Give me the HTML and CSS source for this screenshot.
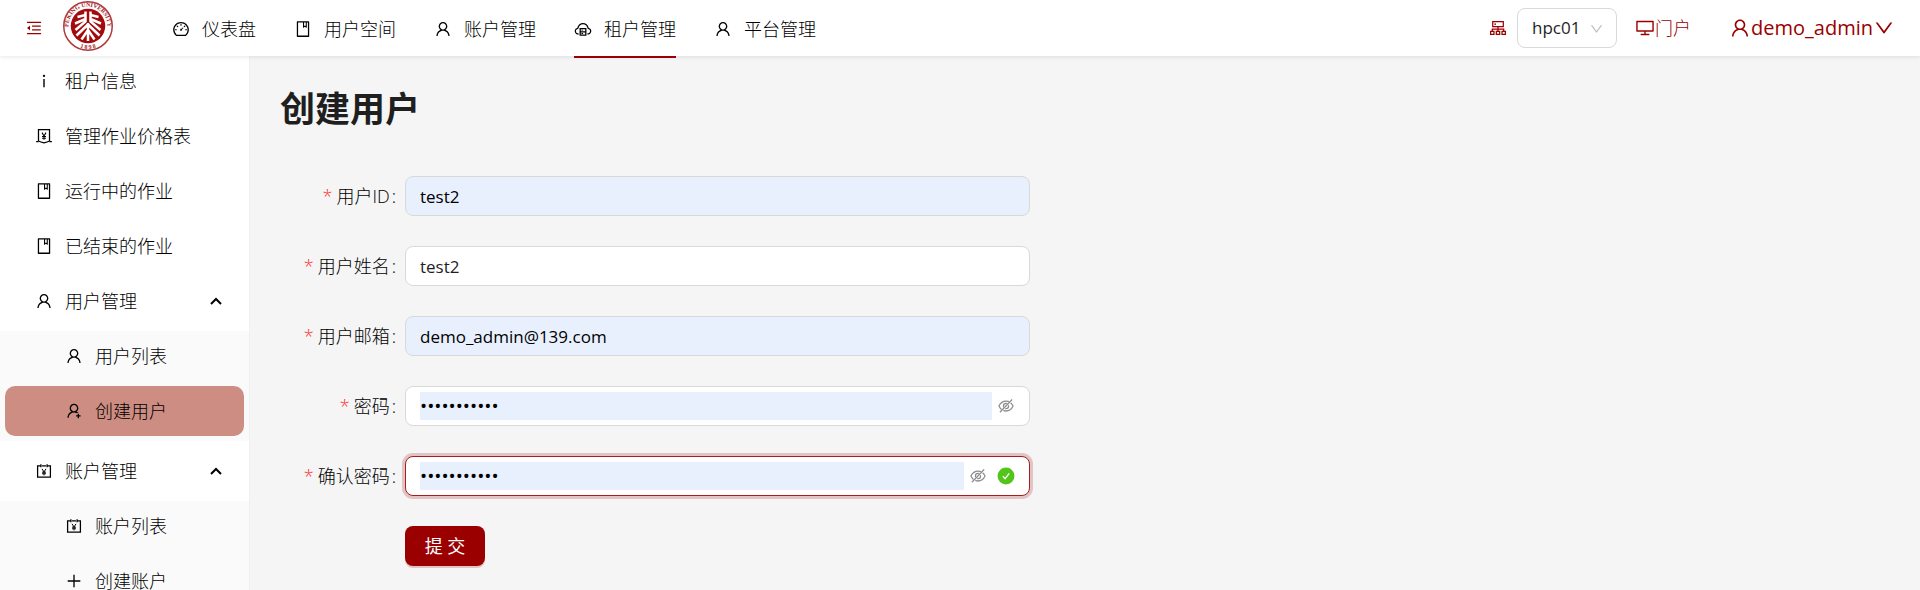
FILE: index.html
```html
<!DOCTYPE html>
<html lang="zh-CN">
<head>
<meta charset="utf-8">
<meta name="viewport" content="width=device-width, initial-scale=1">
<title>创建用户</title>
<link rel="stylesheet" href="styles.css">
</head>
<body>
<svg class="sprite" aria-hidden="true">
  <symbol id="user" viewBox="0 0 1024 1024"><path d="M858.5 763.6a374 374 0 00-80.6-119.5 375.63 375.63 0 00-119.5-80.6c-.4-.2-.8-.3-1.2-.5C719.5 518 760 444.7 760 362c0-137-111-248-248-248S264 225 264 362c0 82.7 40.5 156 102.8 201.1-.4.2-.8.3-1.2.5-44.8 18.9-85 46-119.5 80.6a375.63 375.63 0 00-80.6 119.5A371.7 371.7 0 00136 901.8a8 8 0 008 8.2h60c4.4 0 7.9-3.5 8-7.8 2-77.2 33-149.5 87.8-204.3 56.7-56.7 132-87.9 212.2-87.9s155.5 31.2 212.2 87.9C779 752.7 810 825 812 902.2c.1 4.4 3.6 7.8 8 7.8h60a8 8 0 008-8.2c-1-47.8-10.9-94.3-29.5-138.2zM512 534c-45.9 0-89.1-17.9-121.6-50.4S340 407.9 340 362c0-45.9 17.9-89.1 50.4-121.6S466.1 190 512 190s89.1 17.9 121.6 50.4S684 316.1 684 362c0 45.9-17.9 89.1-50.4 121.6S557.9 534 512 534z"/></symbol>
  <symbol id="user-add" viewBox="0 0 1024 1024"><path d="M678.3 642.4c24.2-13 51.9-20.4 81.4-20.4h.1c3 0 4.4-3.6 2.2-5.6a371.67 371.67 0 00-103.7-65.8c-.4-.2-.8-.3-1.2-.5C719.2 505 759.6 431.7 759.6 349c0-137-110.8-248-247.5-248S264.7 212 264.7 349c0 82.7 40.4 156 102.6 201.1-.4.2-.8.3-1.2.5-44.7 18.9-84.8 46-119.3 80.6a373.42 373.42 0 00-80.4 119.5A373.6 373.6 0 00137 888.8a8 8 0 008 8.2h59.9c4.3 0 7.9-3.5 8-7.8 2-77.2 32.9-149.5 87.6-204.3C357 628.2 432.2 597 512.2 597c56.7 0 111.1 15.7 158 45.1a8.1 8.1 0 008.1.3zM512.2 521c-45.8 0-88.9-17.9-121.4-50.4A171.2 171.2 0 01340.5 349c0-45.9 17.9-89.1 50.3-121.6S466.3 177 512.2 177s88.9 17.9 121.4 50.4A171.2 171.2 0 01683.9 349c0 45.9-17.9 89.1-50.3 121.6C601.1 503.1 558 521 512.2 521zM880 759h-84v-84c0-4.4-3.6-8-8-8h-56c-4.4 0-8 3.6-8 8v84h-84c-4.4 0-8 3.6-8 8v56c0 4.4 3.6 8 8 8h84v84c0 4.4 3.6 8 8 8h56c4.4 0 8-3.6 8-8v-84h84c4.4 0 8-3.6 8-8v-56c0-4.4-3.6-8-8-8z"/></symbol>
  <symbol id="book" viewBox="0 0 1024 1024"><path d="M832 64H192c-17.7 0-32 14.3-32 32v832c0 17.7 14.3 32 32 32h640c17.7 0 32-14.3 32-32V96c0-17.7-14.3-32-32-32zm-260 72h96v209.9L621.5 312 572 347.4V136zm220 752H232V136h280v296.9c0 3.3 1 6.6 3 9.3a15.9 15.9 0 0022.3 3.7l83.8-59.9 81.4 59.4c2.7 2 6 3.1 9.4 3.1 8.8 0 16-7.2 16-16V136h64v752z"/></symbol>
  <symbol id="desktop" viewBox="0 0 1024 1024"><path d="M928 140H96c-17.7 0-32 14.3-32 32v496c0 17.7 14.3 32 32 32h380v112H304c-8.8 0-16 7.2-16 16v48c0 4.4 3.6 8 8 8h432c4.4 0 8-3.6 8-8v-48c0-8.8-7.2-16-16-16H548V700h380c17.7 0 32-14.3 32-32V172c0-17.7-14.3-32-32-32zm-40 488H136V212h752v416z"/></symbol>
  <symbol id="down" viewBox="0 0 1024 1024"><path d="M884 256h-75c-5.1 0-9.9 2.5-12.9 6.6L512 654.2 227.9 262.6c-3-4.1-7.8-6.6-12.9-6.6h-75c-6.5 0-10.3 7.4-6.5 12.7l352.6 486.1c12.8 17.6 39 17.6 51.7 0l352.6-486.1c3.9-5.3.1-12.7-6.4-12.7z"/></symbol>
  <symbol id="info" viewBox="0 0 1024 1024"><path d="M448 224a64 64 0 10128 0 64 64 0 10-128 0zm96 168h-64c-4.4 0-8 3.6-8 8v464c0 4.4 3.6 8 8 8h64c4.4 0 8-3.6 8-8V400c0-4.4-3.6-8-8-8z"/></symbol>
  <symbol id="fold" viewBox="0 0 1024 1024"><path d="M408 442h480c4.4 0 8-3.6 8-8v-56c0-4.4-3.6-8-8-8H408c-4.4 0-8 3.6-8 8v56c0 4.4 3.6 8 8 8zm-8 204c0 4.4 3.6 8 8 8h480c4.4 0 8-3.6 8-8v-56c0-4.4-3.6-8-8-8H408c-4.4 0-8 3.6-8 8v56zm504-486H120c-4.4 0-8 3.6-8 8v56c0 4.4 3.6 8 8 8h784c4.4 0 8-3.6 8-8v-56c0-4.4-3.6-8-8-8zm0 632H120c-4.4 0-8 3.6-8 8v56c0 4.4 3.6 8 8 8h784c4.4 0 8-3.6 8-8v-56c0-4.4-3.6-8-8-8zM115.4 518.9L271.7 642c5.8 4.6 14.4.5 14.4-6.9V388.9c0-7.4-8.5-11.5-14.4-6.9L115.4 505.1a8.74 8.74 0 000 13.8z"/></symbol>
  <symbol id="dashboard" viewBox="0 0 1024 1024"><path d="M924.8 385.6a446.7 446.7 0 00-96-142.4 446.7 446.7 0 00-142.4-96C631.1 123.8 572.5 112 512 112s-119.1 11.8-174.4 35.2a446.7 446.7 0 00-142.4 96 446.7 446.7 0 00-96 142.4C75.8 440.9 64 499.5 64 560c0 132.7 58.3 257.7 159.9 343.1l1.7 1.4c5.8 4.8 13.1 7.5 20.6 7.5h531.7c7.5 0 14.8-2.7 20.6-7.5l1.7-1.4C901.7 817.7 960 692.7 960 560c0-60.5-11.9-119.1-35.2-174.4zM761.4 836H262.6A371.12 371.12 0 01140 560c0-99.4 38.7-192.8 109-263 70.3-70.3 163.7-109 263-109 99.4 0 192.8 38.7 263 109 70.3 70.3 109 163.7 109 263 0 105.6-44.5 205.5-122.6 276zM623.5 421.5a8.03 8.03 0 00-11.3 0L527.7 506c-18.7-5-39.4-.2-54.1 14.5a55.95 55.95 0 000 79.2 55.95 55.95 0 0079.2 0 55.87 55.87 0 0014.5-54.1l84.5-84.5c3.1-3.1 3.1-8.2 0-11.3l-28.3-28.3zM490 320h44c4.4 0 8-3.6 8-8v-80c0-4.4-3.6-8-8-8h-44c-4.4 0-8 3.6-8 8v80c0 4.4 3.6 8 8 8zm260 218v44c0 4.4 3.6 8 8 8h80c4.4 0 8-3.6 8-8v-44c0-4.4-3.6-8-8-8h-80c-4.4 0-8 3.6-8 8zm12.7-197.2l-31.1-31.1a8.03 8.03 0 00-11.3 0l-56.6 56.6a8.03 8.03 0 000 11.3l31.1 31.1c3.1 3.1 8.2 3.1 11.3 0l56.6-56.6c3.1-3.1 3.1-8.2 0-11.3zm-458.6-31.1a8.03 8.03 0 00-11.3 0l-31.1 31.1a8.03 8.03 0 000 11.3l56.6 56.6c3.1 3.1 8.2 3.1 11.3 0l31.1-31.1c3.1-3.1 3.1-8.2 0-11.3l-56.6-56.6zM262 530h-80c-4.4 0-8 3.6-8 8v44c0 4.4 3.6 8 8 8h80c4.4 0 8-3.6 8-8v-44c0-4.4-3.6-8-8-8z"/></symbol>
  <symbol id="cloud-server" viewBox="0 0 1024 1024"><g fill="none" stroke="currentColor" stroke-width="72"><path d="M262 792A162 162 0 01215 470C255 340 370 208 512 208s257 132 297 262a162 162 0 01-47 322"/><path d="M352 484h320v376H352zM352 672h320"/></g><path d="M424 550h90v52h-90zM424 738h90v52h-90z"/></symbol>
  <symbol id="money" viewBox="0 0 1024 1024"><g fill="none" stroke="currentColor" stroke-width="72"><path d="M198 150h628v650c-90 50-200 80-314 100-114-20-224-50-314-100z"/><path d="M64 826h134M826 826h134"/><path d="M400 320l112 190 112-190M512 510v220M400 540h224M400 640h224" stroke-width="60"/></g></symbol>
  <symbol id="account-book" viewBox="0 0 1024 1024"><g fill="none" stroke="currentColor" stroke-width="72"><path d="M300 220H148v640h728V220H724M400 220h224M336 124v180M688 124v180"/><path d="M400 390l112 180 112-180M512 570v190M400 580h224M400 670h224" stroke-width="56"/></g></symbol>
  <symbol id="cluster" viewBox="0 0 1024 1024"><g fill="none" stroke="currentColor" stroke-width="72"><path d="M212 146h600v290H212zM512 436v230M188 700V570h648v130M92 700h190v180H92zM417 700h190v180H417zM742 700h190v180H742z"/></g><circle cx="350" cy="290" r="50"/></symbol>
  <symbol id="eye-off" viewBox="0 0 1024 1024"><g fill="none" stroke="currentColor" stroke-width="72"><path d="M110 512C200 322 330 228 512 228s312 94 402 284C824 702 694 796 512 796S200 702 110 512z"/><circle cx="512" cy="512" r="145"/></g><path d="M850 80L944 150 180 950 90 880z" class="eye-gap"/><path d="M836 120l48 44L190 890l-50-44z"/></symbol>
  <symbol id="plus" viewBox="0 0 1024 1024"><path d="M474 150h76v324h322v76H550v322h-76V550H152v-76h322z"/></symbol>
  <symbol id="check" viewBox="0 0 1024 1024"><circle cx="512" cy="512" r="480"/><path d="M330 520l130 150 235-310" fill="none" stroke="#fff" stroke-width="76"/></symbol>
  <symbol id="arrow-up" viewBox="0 0 12 12"><path d="M1 9l5-5 5 5" fill="none" stroke="currentColor" stroke-width="2"/></symbol>
</svg>

<header class="header">
  <button class="fold" type="button" aria-label="收起菜单"><svg class="icon"><use href="#fold"/></svg></button>
  <a class="logo" href="#" aria-label="首页">
    <svg class="logo-mark" viewBox="0 0 100 100">
      <defs>
        <path id="ring-top" d="M15 67.500A39 39 0 1 1 85 67.500"/>
        <path id="ring-bottom" d="M24 88A46 46 0 0 0 76 88"/>
      </defs>
      <circle cx="50" cy="50" r="48.500" fill="#fff" stroke="#b03a3e" stroke-width="3"/>
      <circle cx="50" cy="50" r="34.500" fill="#a30a0e"/>
      <text class="ring-text"><textPath href="#ring-top" startOffset="50%">PEKING UNIVERSITY</textPath></text>
      <text class="ring-text"><textPath href="#ring-bottom" startOffset="50%">1 8 9 8</textPath></text>
      <g fill="none" stroke="#fff" stroke-width="5">
        <path d="M45 21v20L25 58M45 28L29 32M45 36L24 45M55 21v20l20 17M55 28l16 4M55 36l21 9"/>
        <path d="M50 44v16M50 47L27 69M50 47l23 22M50 58L37 77M50 58l13 19M50 62v18"/>
      </g>
    </svg>
  </a>
  <nav class="top-nav" aria-label="主导航">
    <a class="top-link" href="#"><svg class="icon"><use href="#dashboard"/></svg>仪表盘</a>
    <a class="top-link" href="#"><svg class="icon"><use href="#book"/></svg>用户空间</a>
    <a class="top-link" href="#"><svg class="icon"><use href="#user"/></svg>账户管理</a>
    <a class="top-link top-link-active" href="#" aria-current="page"><svg class="icon"><use href="#cloud-server"/></svg>租户管理</a>
    <a class="top-link" href="#"><svg class="icon"><use href="#user"/></svg>平台管理</a>
  </nav>
  <div class="tools">
    <svg class="icon"><use href="#cluster"/></svg>
    <div class="cluster">
      <select class="cluster-select" aria-label="集群"><option>hpc01</option></select>
      <svg class="icon cluster-arrow"><use href="#down"/></svg>
    </div>
    <a class="portal" href="#"><svg class="icon icon-medium"><use href="#desktop"/></svg>门户</a>
    <button class="account" type="button"><svg class="icon icon-large"><use href="#user"/></svg>demo_admin<svg class="icon icon-large"><use href="#down"/></svg></button>
  </div>
</header>

<div class="body">
  <nav class="sidebar" aria-label="租户管理">
    <a class="side-link" href="#"><svg class="icon"><use href="#info"/></svg>租户信息</a>
    <a class="side-link" href="#"><svg class="icon"><use href="#money"/></svg>管理作业价格表</a>
    <a class="side-link" href="#"><svg class="icon"><use href="#book"/></svg>运行中的作业</a>
    <a class="side-link" href="#"><svg class="icon"><use href="#book"/></svg>已结束的作业</a>
    <button class="side-link" type="button" aria-expanded="true"><svg class="icon"><use href="#user"/></svg>用户管理<svg class="side-arrow"><use href="#arrow-up"/></svg></button>
    <div class="submenu">
      <a class="side-link" href="#"><svg class="icon"><use href="#user"/></svg>用户列表</a>
      <a class="side-link side-link-active" href="#" aria-current="page"><svg class="icon"><use href="#user-add"/></svg>创建用户</a>
    </div>
    <button class="side-link side-group" type="button" aria-expanded="true"><svg class="icon"><use href="#account-book"/></svg>账户管理<svg class="side-arrow"><use href="#arrow-up"/></svg></button>
    <div class="submenu">
      <a class="side-link" href="#"><svg class="icon"><use href="#account-book"/></svg>账户列表</a>
      <a class="side-link" href="#"><svg class="icon"><use href="#plus"/></svg>创建账户</a>
    </div>
  </nav>

  <main class="content">
    <h1 class="title">创建用户</h1>
    <form class="form">
      <label class="label" for="user-id"><span class="required">*</span>用户ID<span class="colon">:</span></label>
      <input class="field field-filled" id="user-id" type="text" value="test2">
      <label class="label" for="user-name"><span class="required">*</span>用户姓名<span class="colon">:</span></label>
      <input class="field" id="user-name" type="text" value="test2">
      <label class="label" for="email"><span class="required">*</span>用户邮箱<span class="colon">:</span></label>
      <input class="field field-filled" id="email" type="text" value="demo_admin@139.com">
      <label class="label" for="password"><span class="required">*</span>密码<span class="colon">:</span></label>
      <div class="field secret">
        <input class="secret-input" id="password" type="password" value="password123">
        <button class="reveal" type="button" aria-label="显示密码"><svg class="icon"><use href="#eye-off"/></svg></button>
      </div>
      <label class="label" for="confirm"><span class="required">*</span>确认密码<span class="colon">:</span></label>
      <div class="field secret secret-focused">
        <input class="secret-input" id="confirm" type="password" value="password123">
        <button class="reveal" type="button" aria-label="显示确认密码"><svg class="icon"><use href="#eye-off"/></svg></button>
        <svg class="icon valid"><use href="#check"/></svg>
      </div>
      <button class="submit" type="submit">提 交</button>
    </form>
  </main>
</div>
</body>
</html>
```
FILE: styles.css
```css
* {
  box-sizing: border-box;
}

body {
  display: flex;
  flex-direction: column;
  height: 100vh;
  margin: 0;
  overflow: hidden;
  background: #f5f5f5;
  color: #1f1f1f;
  font-family: "Open Sans", "Noto Sans CJK SC", sans-serif;
  font-size: 18px;
  line-height: 28px;
}

a,
button,
input,
select {
  color: inherit;
  font: inherit;
  text-decoration: none;
}

button {
  padding: 0;
  border: 0;
  background: none;
  cursor: pointer;
}

.top-nav,
.sidebar,
.label {
  color: #000;
  font-weight: 300;
}

.sprite {
  position: absolute;
  width: 0;
  height: 0;
}

.icon {
  flex: none;
  width: 18px;
  height: 18px;
  fill: currentColor;
}

.icon-medium {
  width: 20px;
  height: 20px;
}

.icon-large {
  width: 22px;
  height: 22px;
}

.header {
  position: relative;
  z-index: 1;
  display: flex;
  flex: none;
  align-items: center;
  height: 56px;
  padding: 0 25px;
  background: #fff;
  box-shadow: 0 1px 4px rgba(0, 21, 41, 0.1);
}

.fold {
  display: flex;
  color: #9b0000;
}

.logo {
  display: flex;
  align-self: flex-start;
  margin-left: 20px;
}

.logo-mark {
  width: 50px;
  height: 52px;
}

.ring-text {
  fill: #a51a1e;
  font-family: "Liberation Serif", serif;
  font-size: 12px;
  font-weight: 700;
  text-anchor: middle;
}

.top-nav {
  display: flex;
  align-self: stretch;
  gap: 38px;
  margin-left: 59px;
}

.top-link {
  display: flex;
  align-items: center;
  gap: 12px;
  height: 58px;
  padding-top: 2px;
  border-bottom: 2px solid transparent;
}

.top-link-active {
  border-color: #9b0000;
}

.tools {
  display: flex;
  align-items: center;
  margin-left: auto;
  color: #9b0000;
}

.cluster {
  position: relative;
  margin-left: 10px;
  color: #1f1f1f;
}

.cluster-select {
  width: 100px;
  height: 40px;
  padding: 0 14px;
  border: 1px solid #d9d9d9;
  border-radius: 8px;
  background: #fff;
  font-size: 17px;
  appearance: none;
}

.cluster-arrow {
  position: absolute;
  top: 12px;
  right: 13px;
  width: 15px;
  color: #bfbfbf;
  pointer-events: none;
}

.portal {
  display: flex;
  align-items: center;
  margin-left: 18px;
  font-weight: 300;
}

.account {
  display: flex;
  align-items: center;
  margin-left: 38px;
  font-size: 20px;
}

.body {
  display: flex;
  flex: 1;
  min-height: 0;
}

.sidebar {
  flex: none;
  width: 250px;
  overflow: hidden;
  border-right: 1px solid #f0f0f0;
  background: #fff;
}

.side-link {
  display: flex;
  align-items: center;
  gap: 12px;
  width: calc(100% - 10px);
  height: 50px;
  margin: 0 5px 5px;
  padding: 0 22px 0 30px;
  border-radius: 10px;
}

.side-group {
  margin-top: 5px;
}

.side-arrow {
  width: 12px;
  height: 12px;
  margin-left: auto;
}

.submenu {
  display: flow-root;
  background: #fafafa;
}

.submenu .side-link {
  padding-left: 60px;
}

.side-link-active {
  background: #cd8d82;
}

.content {
  flex: 1;
  padding: 28px 30px;
}

.title {
  margin: 0;
  font-size: 35px;
  line-height: 50px;
}

.form {
  display: grid;
  grid-template-columns: 125px 1fr;
  gap: 30px 0;
  max-width: 750px;
  margin-top: 42px;
}

.label {
  display: flex;
  align-items: center;
  justify-content: flex-end;
  height: 40px;
  padding-right: 9px;
}

.required {
  margin-right: 4px;
  color: #ff2d2f;
}

.colon {
  margin-left: 2px;
}

.field {
  width: 100%;
  height: 40px;
  padding: 0 14px;
  border: 1px solid #d9d9d9;
  border-radius: 8px;
  background: #fff;
  font-size: 17px;
}

.field-filled {
  background: #e8f0fe;
  color: #000;
}

.secret {
  display: flex;
  align-items: center;
}

.secret-focused {
  border-color: #a61d1d;
  box-shadow: 0 0 0 3px rgba(155, 0, 0, 0.2);
}

.secret-input {
  flex: 1;
  min-width: 0;
  height: 28px;
  margin-right: 5px;
  padding: 0;
  border: 0;
  outline: 0;
  background: #e8f0fe;
  color: #000;
  font-size: 19px;
}

.reveal {
  display: flex;
  color: #8c8c8c;
}

.eye-gap {
  fill: #fff;
}

.valid {
  margin-left: 10px;
  color: #52c41a;
}

.submit {
  grid-column: 2;
  justify-self: start;
  width: 80px;
  height: 40px;
  border-radius: 8px;
  background: #9b0000;
  box-shadow: 0 2px 0 rgba(155, 0, 0, 0.2);
  color: #fff;
}
```
